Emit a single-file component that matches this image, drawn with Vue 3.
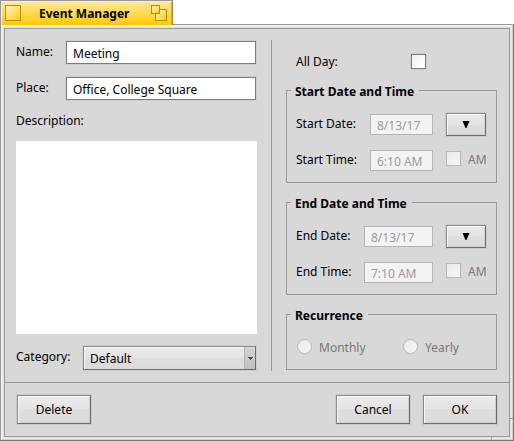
<script setup>
import { reactive } from 'vue'

const event = reactive({
  name: 'Meeting',
  place: 'Office, College Square',
  description: '',
  category: 'Default',
  allDay: false,
  recurrence: ''
})

const periods = reactive([
  { id: 'start', title: 'Start', date: '8/13/17', time: '6:10 AM', am: false },
  { id: 'end', title: 'End', date: '8/13/17', time: '7:10 AM', am: false }
])
</script>

<template>
  <div class="window">
    <header class="tab">
      <button class="tab-button" type="button" aria-label="Close">
        <svg width="16" height="16" viewBox="0 0 16 16">
          <defs>
            <linearGradient id="gold" x1="0" y1="0" x2="1" y2="1">
              <stop offset="0" stop-color="#fff6cc" />
              <stop offset="1" stop-color="#ffcb00" />
            </linearGradient>
          </defs>
          <rect x="0.5" y="0.5" width="15" height="15" fill="url(#gold)" stroke="#b89000" />
        </svg>
      </button>
      <h1 class="title">Event Manager</h1>
      <button class="tab-button" type="button" aria-label="Zoom">
        <svg width="16" height="16" viewBox="0 0 16 16">
          <rect x="4.5" y="4.5" width="11" height="11" fill="url(#gold)" stroke="#b89000" />
          <rect x="0.5" y="0.5" width="8" height="8" fill="url(#gold)" stroke="#b89000" />
        </svg>
      </button>
    </header>

    <form class="frame" @submit.prevent>
      <div class="panel">
        <div class="main">
          <section class="details">
            <div class="row">
              <label class="label" for="name">Name:</label>
              <input id="name" v-model="event.name" class="field" type="text" />
            </div>
            <div class="row">
              <label class="label" for="place">Place:</label>
              <input id="place" v-model="event.place" class="field" type="text" />
            </div>
            <label class="description-label" for="description">Description:</label>
            <textarea id="description" v-model="event.description" class="description"></textarea>
            <div class="row">
              <label class="label label-wide" for="category">Category:</label>
              <div class="select">
                <select id="category" v-model="event.category">
                  <option>Default</option>
                </select>
                <span class="select-arrow">
                  <svg width="5" height="3" viewBox="0 0 5 3"><path d="M0 0H5V1H4V2H3V3H2V2H1V1H0Z" fill="#505050" /></svg>
                </span>
              </div>
            </div>
          </section>

          <section class="schedule">
            <div class="all-day">
              <label for="all-day">All Day:</label>
              <input id="all-day" v-model="event.allDay" class="check" type="checkbox" />
            </div>

            <fieldset v-for="p in periods" :key="p.id" class="group" :class="p.id">
              <legend>{{ p.title }} Date and Time</legend>
              <div class="slot date">
                <label class="slot-label" :for="p.id + '-date'">{{ p.title }} Date:</label>
                <input :id="p.id + '-date'" v-model="p.date" class="field" type="text" disabled />
                <button class="button picker" type="button" :aria-label="'Pick ' + p.id + ' date'">
                  <svg width="8" height="7" viewBox="0 0 8 7"><path d="M0.5 0H7.5L4.5 7H3.5Z" fill="#000" /></svg>
                </button>
              </div>
              <div class="slot time">
                <label class="slot-label" :for="p.id + '-time'">{{ p.title }} Time:</label>
                <input :id="p.id + '-time'" v-model="p.time" class="field" type="text" disabled />
                <label class="am">
                  <input v-model="p.am" class="check" type="checkbox" disabled />
                  <span>AM</span>
                </label>
              </div>
            </fieldset>

            <fieldset class="group recurrence">
              <legend>Recurrence</legend>
              <div class="options">
                <label class="option">
                  <input v-model="event.recurrence" class="radio" type="radio" name="recurrence" value="monthly" disabled />
                  <span>Monthly</span>
                </label>
                <label class="option">
                  <input v-model="event.recurrence" class="radio" type="radio" name="recurrence" value="yearly" disabled />
                  <span>Yearly</span>
                </label>
              </div>
            </fieldset>
          </section>
        </div>

        <footer class="actions">
          <button class="button action delete" type="button">Delete</button>
          <button class="button action" type="button">Cancel</button>
          <button class="button action" type="submit">OK</button>
        </footer>
      </div>
    </form>
  </div>
</template>

<style>
body {
  margin: 0;
  background: #fff;
}
</style>

<style scoped>
.window,
.window * {
  box-sizing: border-box;
}

.window {
  display: flex;
  flex-direction: column;
  min-height: 100vh;
  font: 12px/16px "Noto Sans", sans-serif;
  color: #000;
}

.window input,
.window select,
.window textarea,
.window button {
  margin: 0;
  border-radius: 0;
  font: inherit;
  color: inherit;
}

.tab {
  position: relative;
  z-index: 1;
  display: flex;
  align-items: flex-start;
  align-self: flex-start;
  gap: 18px;
  height: 25px;
  margin-bottom: -1px;
  padding: 4px 5px 0 4px;
  border: 1px solid #999;
  border-right-color: #888;
  border-bottom: 0;
  background: linear-gradient(#ffe9a0, #ffcb00);
  box-shadow: inset 1px 1px #fff0b8, inset -1px 0 #e6b400;
}

.tab-button {
  display: block;
  padding: 0;
  border: 0;
  background: none;
}

.tab-button svg {
  display: block;
}

.title {
  margin: 0;
  padding: 1px 4px 0 0;
  font-size: 12px;
  line-height: 16px;
  font-weight: 700;
}

.frame {
  position: relative;
  flex: 1;
  display: flex;
  padding: 3px;
  border: 1px solid #999;
  border-right-color: #777;
  border-bottom-color: #777;
  background: #e0e0e0;
  box-shadow: inset 1px 1px #f2f2f2, inset -1px -1px #d0d0d0, inset 2px 2px #ececec, inset -2px -2px #ececec;
}

.frame::before,
.frame::after {
  content: "";
  position: absolute;
  background: #999;
}

.frame::before {
  right: 0;
  bottom: 21px;
  width: 3px;
  height: 1px;
}

.frame::after {
  right: 21px;
  bottom: 0;
  width: 1px;
  height: 3px;
}

.panel {
  flex: 1;
  display: flex;
  flex-direction: column;
  border: 1px solid #999;
  background: #d8d8d8;
}

.main {
  flex: 1;
  display: grid;
  grid-template-columns: 256fr 225fr;
  padding: 11px 12px 11px 11px;
}

.details {
  min-width: 0;
  display: flex;
  flex-direction: column;
  padding: 1px 14px 1px 0;
  border-right: 1px solid #999;
}

.row {
  display: flex;
  align-items: flex-start;
  padding-right: 1px;
}

.row + .row {
  margin-top: 13px;
}

.label {
  flex: 0 0 50px;
  padding-top: 3px;
}

.label-wide {
  flex-basis: 67px;
}

.field {
  flex: 1;
  min-width: 0;
  height: 23px;
  padding: 1px 6px 0;
  border: 1px solid #7c7c7c;
  outline: 0;
  background: #fff;
  box-shadow: 0 0 0 1px #cecece;
}

.description-label {
  margin: 13px 0 12px;
}

.window .description {
  flex: 1;
  width: 100%;
  min-height: 96px;
  margin-bottom: 12px;
  padding: 4px;
  border: 0;
  outline: 0;
  resize: none;
  background: #fff;
}

.select {
  position: relative;
  flex: 1;
  display: flex;
}

.select select {
  flex: 1;
  height: 24px;
  padding: 1px 18px 0 6px;
  border: 1px solid #8c8c8c;
  border-right-color: #6c6c6c;
  border-bottom-color: #6c6c6c;
  appearance: none;
  background: linear-gradient(#ebebeb, #e3e3e3 50%, #dedede 50%, #dbdbdb);
  box-shadow: 0 0 0 1px #cecece, inset 1px 1px #f6f6f6;
}

.select-arrow {
  position: absolute;
  top: 1px;
  right: 1px;
  bottom: 1px;
  width: 11px;
  display: flex;
  align-items: center;
  justify-content: center;
  border-left: 1px solid #b4b4b4;
  background: linear-gradient(#d4d4d4, #c0c0c0);
  pointer-events: none;
}

.schedule {
  min-width: 0;
  padding: 14px 0 0 14px;
}

.all-day {
  display: flex;
  align-items: center;
  height: 15px;
  margin-bottom: 14px;
  padding-left: 10px;
}

.all-day label {
  flex: 0 0 115px;
}

.check,
.radio {
  flex: none;
  width: 15px;
  height: 15px;
  appearance: none;
  border: 1px solid #7c7c7c;
  background: linear-gradient(135deg, #f2f2f2, #fff);
  box-shadow: 0 0 0 1px #cecece;
}

.group {
  min-width: 0;
  margin: 0;
  padding: 15px 10px 11px;
  border: 1px solid #999;
}

.group + .group {
  margin-top: 12px;
}

.group legend {
  height: 15px;
  margin-left: -6px;
  padding: 1px 5px 0 4px;
  font-weight: 700;
}

.slot {
  display: grid;
  grid-template-columns: 74px 1fr 40px;
  align-items: start;
  margin-left: -1px;
}

.end .slot {
  grid-template-columns: 68px 1fr 40px;
}

.slot + .slot {
  margin-top: 14px;
}

.slot-label {
  padding-top: 2px;
}

.date .slot-label {
  padding-top: 3px;
}

.window .slot .field {
  height: 21px;
  margin-right: 13px;
  padding-top: 2px;
}

.window .date .field {
  margin-top: 1px;
}

.window .field:disabled {
  border-color: #b4b4b4;
  background: #f3f3f3;
  box-shadow: none;
  color: #9c9c9c;
}

.window .check:disabled,
.window .radio:disabled {
  border-color: #b8b8b8;
  background: linear-gradient(135deg, #ebebeb, #f6f6f6);
  box-shadow: none;
}

.am,
.option {
  display: flex;
  align-items: flex-start;
  gap: 7px;
  height: 15px;
  color: #787878;
}

.am {
  margin-top: 1px;
}

.am span,
.option span {
  padding-top: 1px;
}

.window .radio {
  border-radius: 50%;
}

.recurrence {
  padding: 17px 10px 15px;
}

.options {
  display: grid;
  grid-template-columns: 106px 1fr;
}

.button {
  display: flex;
  align-items: center;
  justify-content: center;
  padding: 0;
  border: 1px solid #8c8c8c;
  border-right-color: #6c6c6c;
  border-bottom-color: #6c6c6c;
  background: linear-gradient(#ebebeb, #e3e3e3 50%, #dedede 50%, #dbdbdb);
  box-shadow: 0 0 0 1px #cacaca, inset 1px 1px #f8f8f8, inset -1px -1px #cfcfcf;
}

.picker {
  height: 23px;
}

.actions {
  display: flex;
  gap: 13px;
  padding: 12px;
  border-top: 1px solid #999;
}

.action {
  width: 74px;
  height: 29px;
}

.window .delete {
  margin-right: auto;
}
</style>
